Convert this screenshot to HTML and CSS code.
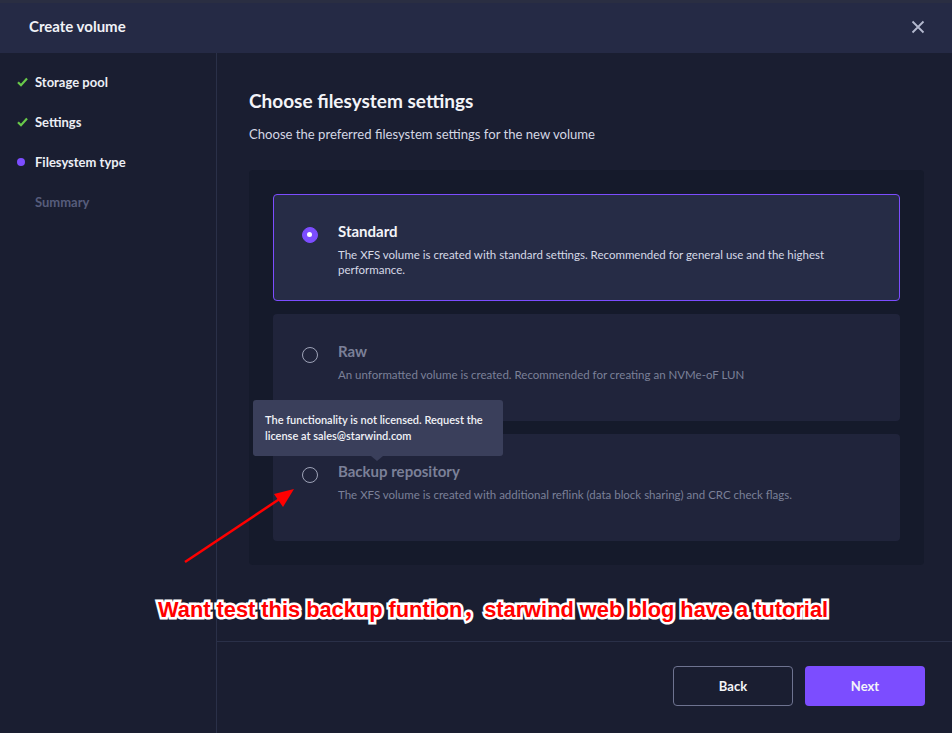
FILE: index.html
```html
<!DOCTYPE html>
<html>
<head>
<meta charset="utf-8">
<link rel="stylesheet" href="styles.css">
</head>
<body>
<div class="dialog">
  <div class="header">
    <div class="title">Create volume</div>
    <svg class="close" width="14" height="14" viewBox="0 0 14 14"><path d="M1.5 1.5 L12.5 12.5 M12.5 1.5 L1.5 12.5" stroke="#b4b9cf" stroke-width="1.8" fill="none"/></svg>
  </div>
  <div class="body">
    <div class="sidebar">
      <div class="step done">
        <svg class="mark" width="11" height="10" viewBox="0 0 11 10"><path d="M1 5.2 L4 8.2 L10 1.5" stroke="#69c94a" stroke-width="2.2" fill="none"/></svg>
        <span>Storage pool</span>
      </div>
      <div class="step done">
        <svg class="mark" width="11" height="10" viewBox="0 0 11 10"><path d="M1 5.2 L4 8.2 L10 1.5" stroke="#69c94a" stroke-width="2.2" fill="none"/></svg>
        <span>Settings</span>
      </div>
      <div class="step active">
        <span class="dot"></span>
        <span>Filesystem type</span>
      </div>
      <div class="step pending">
        <span class="blank"></span>
        <span>Summary</span>
      </div>
    </div>
    <div class="main">
      <div class="content">
        <h1>Choose filesystem settings</h1>
        <p class="sub">Choose the preferred filesystem settings for the new volume</p>
        <div class="panel">
          <div class="card selected">
            <span class="radio on"></span>
            <div class="text">
              <div class="ctitle">Standard</div>
              <div class="cdesc">The XFS volume is created with standard settings. Recommended for general use and the highest performance.</div>
            </div>
          </div>
          <div class="card disabled">
            <span class="radio"></span>
            <div class="text">
              <div class="ctitle">Raw</div>
              <div class="cdesc">An unformatted volume is created. Recommended for creating an NVMe-oF LUN</div>
            </div>
          </div>
          <div class="card disabled">
            <span class="radio"></span>
            <div class="text">
              <div class="ctitle">Backup repository</div>
              <div class="cdesc">The XFS volume is created with additional reflink (data block sharing) and CRC check flags.</div>
            </div>
          </div>
        </div>
      </div>
      <div class="footer">
        <button class="btn back">Back</button>
        <button class="btn next">Next</button>
      </div>
    </div>
  </div>
  <div class="tooltip">The functionality is not licensed. Request the license at sales@starwind.com</div>
  <svg class="annot-arrow" width="952" height="733" viewBox="0 0 952 733">
    <path d="M185 562 L287 494" stroke="#ff0000" stroke-width="2.5" fill="none"/>
    <path d="M294 489 L274 494 L283 507 Z" fill="#ff0000"/>
  </svg>
  <div class="annot-text">Want test this backup funtion，starwind web blog have a tutorial</div>
</div>
</body>
</html>
```
FILE: styles.css
```css
* { box-sizing: border-box; }
html, body { margin: 0; padding: 0; }
body {
  background: #1a1e31;
  font-family: "Source Sans Pro", Lato, "Noto Sans", sans-serif;
  color: #e9ebf3;
}
.dialog {
  position: relative;
  width: 952px;
  height: 733px;
  display: flex;
  flex-direction: column;
  overflow: hidden;
}
.header {
  height: 53px;
  flex: none;
  background: #252a45;
  box-shadow: inset 0 3px 0 #2a2e42;
  display: flex;
  align-items: center;
  justify-content: space-between;
  padding: 0 27px 0 29px;
}
.title { font-size: 15px; font-weight: 700; color: #f1f2f7; margin-top: -2px; }
.close { display: block; }
.body { flex: 1; display: flex; min-height: 0; }
.sidebar {
  width: 217px;
  flex: none;
  border-right: 1px solid #2a3048;
  padding-top: 9px;
}
.step {
  height: 40px;
  display: flex;
  align-items: center;
  padding-left: 17px;
  font-size: 13px;
  font-weight: 700;
  gap: 7px;
}
.step .mark, .step .dot, .step .blank { flex: none; width: 11px; }
.step .dot { height: 8px; width: 8px; border-radius: 50%; background: #7c4dff; margin: 0 3px 0 0; }
.step.done, .step.active { color: #eceef5; }
.step.pending { color: #565c7b; }
.main { flex: 1; display: flex; flex-direction: column; min-width: 0; }
.content { flex: 1; padding: 36px 28px 0 32px; }
h1 { margin: 0; font-size: 19px; line-height: 24px; font-weight: 700; color: #f3f4f8; }
.sub { margin: 12px 0 27px; font-size: 13.1px; line-height: 18px; color: #d4d7e4; }
.panel {
  background: #151a2b;
  border-radius: 4px;
  padding: 24px;
  display: flex;
  flex-direction: column;
  gap: 13px;
}
.card {
  height: 107px;
  border-radius: 4px;
  background: #20243b;
  display: flex;
  align-items: flex-start;
  padding: 27px 30px 0 29px;
  gap: 20px;
}
.card.selected { background: #262c46; border: 1px solid #7c4dff; padding: 26px 29px 0 28px; }
.radio {
  flex: none;
  width: 16px;
  height: 16px;
  border-radius: 50%;
  border: 1.5px solid #9ea3b8;
  margin-top: 6px;
  position: relative;
}
.radio.on { background: #7c4dff; border-color: #7c4dff; }
.radio.on::after {
  content: "";
  position: absolute;
  left: 4px; top: 4px;
  width: 5px; height: 5px;
  border-radius: 50%;
  background: #fff;
}
.ctitle { font-size: 15px; line-height: 20px; font-weight: 700; color: #f3f4f8; margin-bottom: 6px; }
.cdesc { font-size: 11.5px; line-height: 15px; color: #d6d9e6; }
.card.disabled .ctitle { color: #7b8098; }
.card.disabled .cdesc { color: #7b8098; }
.footer {
  height: 92px;
  flex: none;
  border-top: 1px solid #2a3048;
  display: flex;
  justify-content: flex-end;
  align-items: flex-start;
  padding: 24px 27px 0 0;
  gap: 12px;
}
.btn {
  width: 120px;
  height: 40px;
  border-radius: 4px;
  font-family: inherit;
  font-size: 13px;
  font-weight: 700;
  color: #f3f4f8;
}
.back { background: transparent; border: 1px solid #6e7390; }
.next { background: #7c4dff; border: none; }
.tooltip {
  position: absolute;
  left: 253px;
  top: 400px;
  width: 250px;
  height: 56px;
  background: #3a3f5b;
  border-radius: 3px;
  padding: 12px 12px 0 12px;
  font-size: 11px;
  line-height: 16px;
  font-weight: 600;
  color: #f1f2f7;
}
.tooltip::after {
  content: "";
  position: absolute;
  left: 118px;
  bottom: -5px;
  border-left: 6px solid transparent;
  border-right: 6px solid transparent;
  border-top: 5px solid #3a3f5b;
}
.annot-arrow { position: absolute; left: 0; top: 0; pointer-events: none; }
.annot-text {
  position: absolute;
  left: 158px;
  top: 597px;
  font-family: "Liberation Sans", "Noto Sans CJK SC", sans-serif;
  font-weight: 700;
  font-size: 21.8px;
  line-height: 26px;
  color: #ff0000;
  white-space: pre;
  -webkit-text-stroke: 5px #ffffff;
  paint-order: stroke fill;
}
```
